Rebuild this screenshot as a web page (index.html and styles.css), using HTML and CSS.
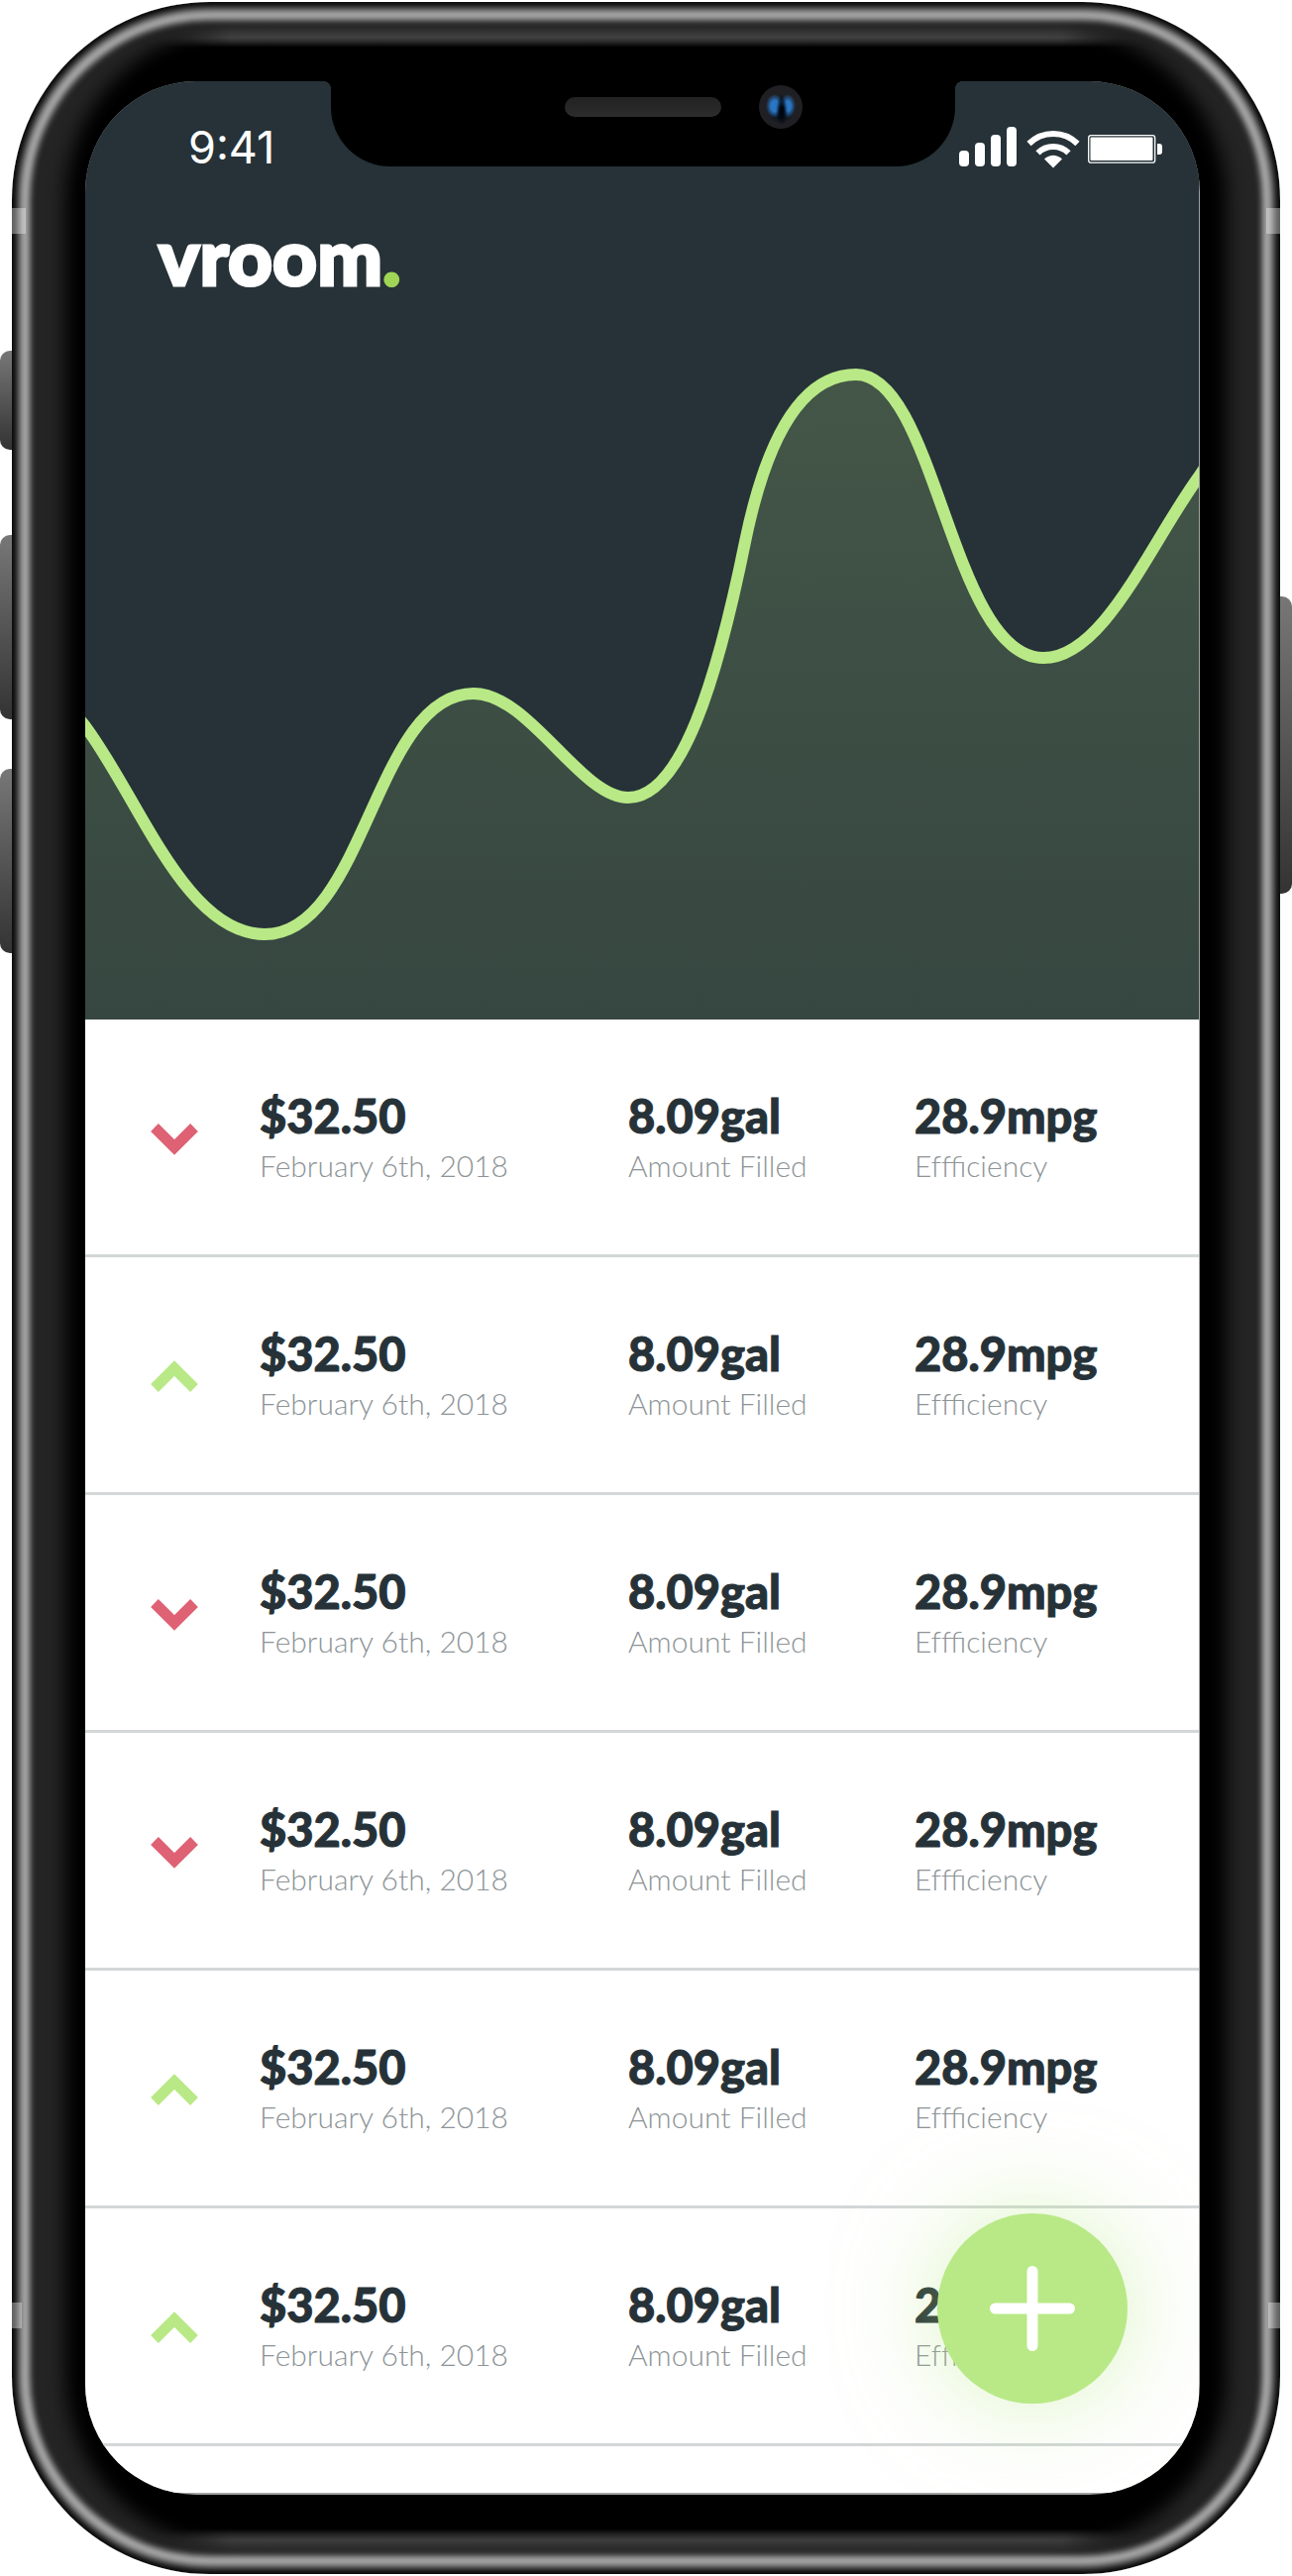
FILE: index.html
```html
<!DOCTYPE html>
<html lang="en">
<head>
<meta charset="utf-8">
<meta name="viewport" content="width=device-width, initial-scale=1">
<title>vroom.</title>
<link rel="stylesheet" href="styles.css">
</head>
<body>
<svg class="sprite" aria-hidden="true">
  <symbol id="down" viewBox="0 0 48 36"><path d="M4 8L24 28L44 8" fill="none" stroke="#de6274" stroke-width="11"/></symbol>
  <symbol id="up" viewBox="0 0 48 36"><path d="M4 31L24 11L44 31" fill="none" stroke="#b8e986" stroke-width="11"/></symbol>
</svg>
<div class="device">
  <span class="key key-mute"></span>
  <span class="key key-up"></span>
  <span class="key key-down"></span>
  <span class="key key-power"></span>
  <div class="phone">
    <span class="band band-top-left"></span>
    <span class="band band-top-right"></span>
    <span class="band band-bottom-left"></span>
    <span class="band band-bottom-right"></span>
    <div class="notch">
      <span class="speaker"></span>
      <span class="camera"></span>
    </div>
    <div class="screen">
      <header class="hero">
        <svg class="chart" viewBox="0 0 1124 947" preserveAspectRatio="none" role="img" aria-label="Fuel efficiency over time">
          <defs>
            <linearGradient id="area" gradientUnits="userSpaceOnUse" x1="0" y1="296" x2="0" y2="947">
              <stop offset="0" stop-color="#b8e986" stop-opacity=".2"/>
              <stop offset="1" stop-color="#b8e986" stop-opacity=".11"/>
            </linearGradient>
          </defs>
          <path fill="url(#area)" d="M0 651C54 723 101 861 181 861C283 861 292 618 392 618C448 618 500 723 548 723C602 723 638 603 666 465C688 358 724 296 778 296C859 296 874 582 967 582C1028 582 1074 468 1124 399V947H0Z"/>
          <path fill="none" stroke="#b8e986" stroke-width="12" d="M-12 636L0 651C54 723 101 861 181 861C283 861 292 618 392 618C448 618 500 723 548 723C602 723 638 603 666 465C688 358 724 296 778 296C859 296 874 582 967 582C1028 582 1074 468 1124 399L1134 384"/>
        </svg>
        <div class="status">
          <time class="clock">9:41</time>
          <svg class="signals" viewBox="968 128 206 42" role="img" aria-label="Signal, Wi-Fi and battery">
            <g fill="#fff">
              <rect x="968" y="152" width="10" height="16" rx="4"/>
              <rect x="984" y="144" width="10" height="24" rx="4"/>
              <rect x="1000" y="136" width="10" height="32" rx="4"/>
              <rect x="1016" y="128" width="10" height="40" rx="4"/>
              <path d="M1063 169.500L1054 160.500Q1063 153 1072 160.500Z"/>
              <rect x="1100.500" y="138.500" width="63" height="23.500" rx="1"/>
              <path d="M1168 145h2q3 0 3 3v5q0 3-3 3h-2z"/>
            </g>
            <g fill="none" stroke="#fff" stroke-width="6">
              <path d="M1038.500 145A35 35 0 0 1 1087.500 145"/>
              <path d="M1047.500 154.400A22 22 0 0 1 1078.500 154.400"/>
            </g>
            <rect x="1098.700" y="136.700" width="67" height="27.500" rx="2.500" fill="none" stroke="#fff" stroke-width="1.300"/>
          </svg>
        </div>
        <h1 class="logo">vroom<span class="dot">.</span></h1>
      </header>
      <main>
        <ul class="fills">
          <li class="fill">
            <svg class="trend" role="img" aria-label="Down"><use href="#down"/></svg>
            <p class="stat"><strong class="value">$32.50</strong><span class="label">February 6th, 2018</span></p>
            <p class="stat"><strong class="value">8.09gal</strong><span class="label">Amount Filled</span></p>
            <p class="stat"><strong class="value">28.9mpg</strong><span class="label">Effficiency</span></p>
          </li>
          <li class="fill">
            <svg class="trend" role="img" aria-label="Up"><use href="#up"/></svg>
            <p class="stat"><strong class="value">$32.50</strong><span class="label">February 6th, 2018</span></p>
            <p class="stat"><strong class="value">8.09gal</strong><span class="label">Amount Filled</span></p>
            <p class="stat"><strong class="value">28.9mpg</strong><span class="label">Effficiency</span></p>
          </li>
          <li class="fill">
            <svg class="trend" role="img" aria-label="Down"><use href="#down"/></svg>
            <p class="stat"><strong class="value">$32.50</strong><span class="label">February 6th, 2018</span></p>
            <p class="stat"><strong class="value">8.09gal</strong><span class="label">Amount Filled</span></p>
            <p class="stat"><strong class="value">28.9mpg</strong><span class="label">Effficiency</span></p>
          </li>
          <li class="fill">
            <svg class="trend" role="img" aria-label="Down"><use href="#down"/></svg>
            <p class="stat"><strong class="value">$32.50</strong><span class="label">February 6th, 2018</span></p>
            <p class="stat"><strong class="value">8.09gal</strong><span class="label">Amount Filled</span></p>
            <p class="stat"><strong class="value">28.9mpg</strong><span class="label">Effficiency</span></p>
          </li>
          <li class="fill">
            <svg class="trend" role="img" aria-label="Up"><use href="#up"/></svg>
            <p class="stat"><strong class="value">$32.50</strong><span class="label">February 6th, 2018</span></p>
            <p class="stat"><strong class="value">8.09gal</strong><span class="label">Amount Filled</span></p>
            <p class="stat"><strong class="value">28.9mpg</strong><span class="label">Effficiency</span></p>
          </li>
          <li class="fill">
            <svg class="trend" role="img" aria-label="Up"><use href="#up"/></svg>
            <p class="stat"><strong class="value">$32.50</strong><span class="label">February 6th, 2018</span></p>
            <p class="stat"><strong class="value">8.09gal</strong><span class="label">Amount Filled</span></p>
            <p class="stat"><strong class="value">28.9mpg</strong><span class="label">Effficiency</span></p>
          </li>
        </ul>
      </main>
      <button class="add" type="button" aria-label="Add fill-up">
        <svg viewBox="0 0 86 86" width="86" height="86" aria-hidden="true"><path d="M43 5.500V80.500M5.500 43H80.500" stroke="#fff" stroke-width="11" stroke-linecap="round"/></svg>
      </button>
    </div>
  </div>
</div>
</body>
</html>
```
FILE: styles.css
```css
* { box-sizing: border-box; }

body {
  margin: 0;
  background: #fff;
  color: #263238;
  font-family: Lato, "Open Sans", sans-serif;
}

.sprite { position: absolute; width: 0; height: 0; }

.device { position: relative; padding: 2px 12px; }

/* Side keys */
.key {
  position: absolute;
  left: 0;
  width: 12px;
  height: 186px;
  border-radius: 10px 0 0 10px;
  background: linear-gradient(#777, #333);
}
.key-mute { top: 354px; height: 100px; }
.key-up { top: 540px; }
.key-down { top: 776px; }
.key-power {
  top: 602px;
  left: auto;
  right: 0;
  height: 300px;
  border-radius: 0 10px 10px 0;
}

/* Metal frame: the backgrounds are the top and bottom sheen, faded at the corners */
.phone {
  position: relative;
  padding: 80px 81px 80px 74px;
  border-radius: 200px;
  background:
    linear-gradient(90deg, #000 130px, transparent 220px, transparent calc(100% - 220px), #000 calc(100% - 130px)),
    linear-gradient(#363636 22px, #494949 30px, #494949 36px, transparent 46px),
    linear-gradient(0deg, #363636 20px, #494949 24px, #494949 34px, transparent 46px),
    #000;
  box-shadow:
    inset 0 0 8px 7px #000,
    inset 0 0 6px 18px #b4b4b4,
    inset 28px 0 18px 26px #242424,
    inset -28px 0 18px 26px #242424;
}

.band {
  position: absolute;
  width: 14px;
  height: 26px;
  background: rgba(255, 255, 255, .35);
}
.band-top-left { top: 208px; left: 0; }
.band-top-right { top: 208px; right: 0; }
.band-bottom-left { bottom: 248px; left: 0; width: 10px; }
.band-bottom-right { bottom: 248px; right: 0; width: 12px; }

.notch {
  position: absolute;
  z-index: 2;
  top: 80px;
  left: 50%;
  width: 630px;
  height: 86px;
  margin-left: -318px;
  border-radius: 0 0 60px 60px;
  background: #000;
}
.notch::before,
.notch::after {
  content: "";
  position: absolute;
  top: 0;
  width: 8px;
  height: 8px;
}
.notch::before { right: 100%; background: radial-gradient(circle at 0 100%, transparent 8px, #000 8px); }
.notch::after { left: 100%; background: radial-gradient(circle at 100% 100%, transparent 8px, #000 8px); }
.speaker {
  position: absolute;
  top: 16px;
  left: 236px;
  width: 158px;
  height: 20px;
  border-radius: 10px;
  background: linear-gradient(#222, #2c2c2c);
}
.camera {
  position: absolute;
  top: 4px;
  left: 432px;
  width: 44px;
  height: 44px;
  border-radius: 50%;
  background:
    radial-gradient(ellipse 6px 15px at 23px 26px, #00060e 30%, transparent),
    radial-gradient(ellipse 9px 12px at 16px 21px, #2a76c4 45%, transparent),
    radial-gradient(ellipse 8px 12px at 29px 21px, #2a76c4 40%, transparent),
    radial-gradient(circle at 22px 24px, #05101c 7px, #202024 15px);
}

/* Screen */
.screen {
  position: relative;
  overflow: hidden;
  padding: 0 1px 2px 0;
  border-radius: 112px;
  background: #a3a3a3;
}

.hero {
  position: relative;
  min-height: 947px;
  padding-top: 46px;
  background: #263238;
  color: #fff;
}
.chart {
  position: absolute;
  inset: 0;
  width: 100%;
  height: 100%;
}
.status {
  position: relative;
  display: flex;
  align-items: center;
  justify-content: space-between;
  padding: 0 36px 0 104px;
}
.clock {
  font: 400 45px/42px Inter, sans-serif;
}
.signals { width: 206px; height: 42px; }
.logo {
  position: relative;
  margin: 48px 0 0;
  padding-left: 74px;
  font-size: 78px;
  font-weight: 900;
  line-height: 80px;
  -webkit-text-stroke: 3px;
}
.dot { color: #a0d556; }

/* Fill-up history */
.fills {
  margin: 0;
  padding: 0 0 47px;
  list-style: none;
  background: #fff;
}
.fill {
  display: grid;
  grid-template-columns: 110px 372fr 289fr 221fr;
  align-items: center;
  min-height: 240px;
  padding: 0 66px;
  border-bottom: 3px solid #d3d7d8;
}
.trend { width: 48px; height: 36px; }
.stat {
  display: flex;
  flex-direction: column;
  gap: 8px;
  margin: 0;
}
.value {
  font-size: 47px;
  font-weight: 900;
  line-height: 48px;
  -webkit-text-stroke: 1px;
}
.label {
  color: #8d9497;
  font-size: 30px;
  font-weight: 300;
  line-height: 36px;
}

.add {
  position: absolute;
  right: 73px;
  bottom: 92px;
  display: grid;
  place-items: center;
  width: 192px;
  height: 192px;
  padding: 0;
  border: 0;
  border-radius: 50%;
  background: #b8e986;
  box-shadow: 0 0 100px rgba(184, 233, 134, .5);
}
```
